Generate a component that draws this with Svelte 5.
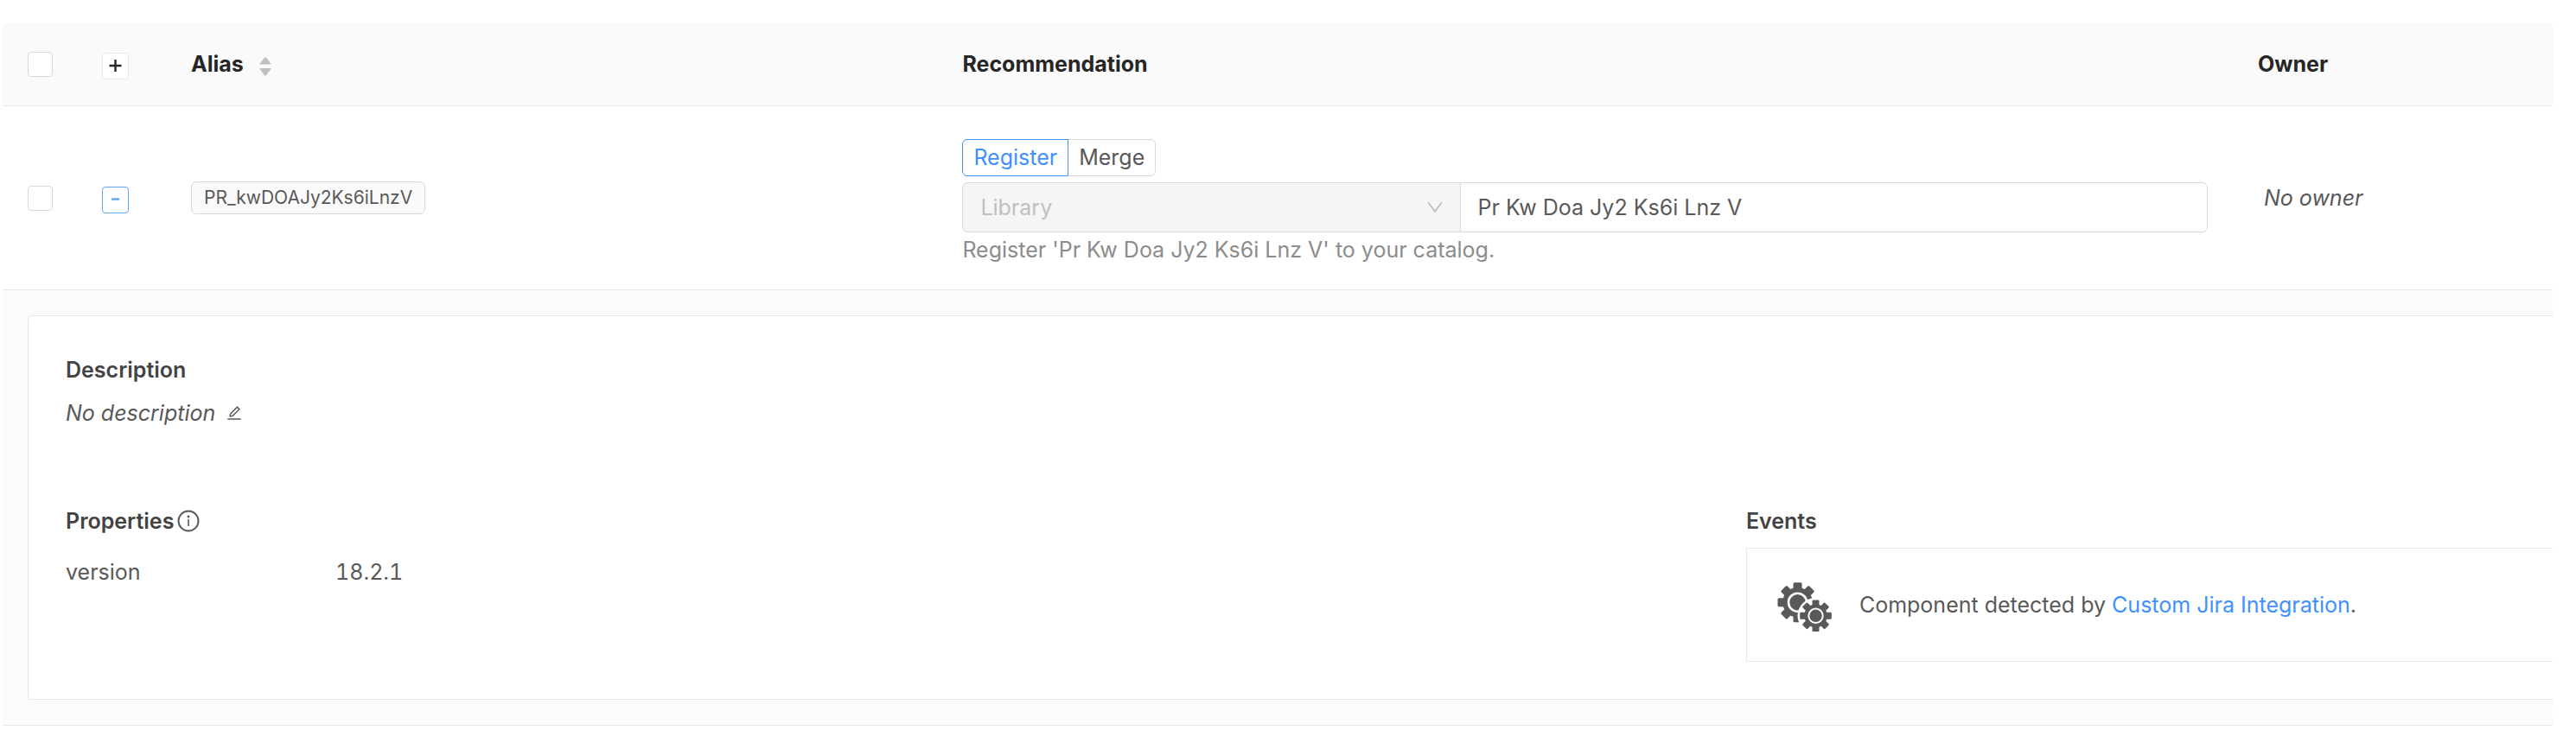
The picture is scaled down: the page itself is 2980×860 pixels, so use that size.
<script>
    let alias = 'PR_kwDOAJy2Ks6iLnzV';
    let name = 'Pr Kw Doa Jy2 Ks6i Lnz V';
    let action = 'register';
    let expanded = true;
    let allSelected = false;
    let selected = false;

    const properties = [{ key: 'version', value: '18.2.1' }];
    const teeth = [0, 45, 90, 135, 180, 225, 270, 315];

    $: message = action === 'register' ? `Register '${name}' to your catalog.` : `Merge '${name}' into your catalog.`;
</script>

<table class="components">
    <colgroup>
        <col class="col-select">
        <col class="col-expand">
        <col class="col-alias">
        <col class="col-recommendation">
        <col>
    </colgroup>
    <thead>
        <tr>
            <th><input type="checkbox" aria-label="Select all" bind:checked={allSelected}></th>
            <th>
                <button class="expand" aria-label="Expand all">
                    <svg viewBox="0 0 29 29"><path d="M7.500 14h14M14.500 7v14" stroke="#262626" stroke-width="2.4" /></svg>
                </button>
            </th>
            <th>
                <span class="sortable">
                    Alias
                    <svg class="sorter" viewBox="0 0 14 22"><path d="M0 8.500L6 .8Q7 0 8 .8L14 8.500zM0 13h14L8 21.200Q7 22 6 21.200z" /></svg>
                </span>
            </th>
            <th>Recommendation</th>
            <th>Owner</th>
        </tr>
    </thead>
    <tbody>
        <tr>
            <td><input type="checkbox" aria-label="Select {alias}" bind:checked={selected}></td>
            <td>
                <button class="expand active" aria-label="Toggle details" on:click={() => (expanded = !expanded)}>
                    <svg viewBox="0 0 29 29"><path d="M10 13.500h9" stroke="#5ba5fb" stroke-width="2.4" /></svg>
                </button>
            </td>
            <td><span class="tag">{alias}</span></td>
            <td class="recommendation">
                <div class="actions">
                    <label class:checked={action === 'register'}>
                        <input type="radio" name="action" value="register" bind:group={action}>Register
                    </label>
                    <label class:checked={action === 'merge'}>
                        <input type="radio" name="action" value="merge" bind:group={action}>Merge
                    </label>
                </div>
                <div class="fields">
                    <div class="type">
                        <select disabled aria-label="Type">
                            <option>Library</option>
                        </select>
                        <svg class="arrow" viewBox="0 0 1024 1024"><path d="M884 256h-75c-5.100 0-9.900 2.500-12.900 6.600L512 654.200 227.900 262.600c-3-4.100-7.800-6.600-12.900-6.600h-75c-6.500 0-10.300 7.400-6.500 12.700l352.600 486.100c12.800 17.600 39 17.600 51.700 0l352.600-486.100c3.900-5.300.1-12.700-6.400-12.700z" /></svg>
                    </div>
                    <input class="name" type="text" aria-label="Name" bind:value={name}>
                </div>
                <p class="message">{message}</p>
            </td>
            <td><em class="owner">No owner</em></td>
        </tr>
        {#if expanded}
            <tr>
                <td class="details" colspan="5">
                    <div class="card">
                        <h4>Description</h4>
                        <p class="description">
                            <em>No description</em>
                            <button class="edit" aria-label="Edit description">
                                <svg viewBox="0 0 1024 1024"><path d="M257.700 752c2 0 4-.2 6-.5L431.900 722c2-.4 3.900-1.300 5.300-2.800l423.900-423.900a9.960 9.960 0 000-14.100L694.900 114.900c-1.900-1.900-4.400-2.900-7.100-2.900s-5.200 1-7.100 2.900L256.800 538.800c-1.500 1.500-2.400 3.300-2.800 5.300l-29.500 168.200a33.500 33.500 0 009.400 29.800c6.600 6.400 14.900 9.900 23.800 9.900zm67.400-174.400L687.800 215l73.300 73.300-362.700 362.600-88.900 15.700 15.600-89zM880 836H144c-17.700 0-32 14.300-32 32v36c0 4.400 3.600 8 8 8h784c4.400 0 8-3.600 8-8v-36c0-17.700-14.300-32-32-32z" /></svg>
                            </button>
                        </p>
                        <div class="columns">
                            <section>
                                <h4>
                                    Properties
                                    <svg class="info" viewBox="0 0 28 28">
                                        <circle cx="14" cy="14" r="11.500" fill="none" stroke="#595959" stroke-width="2" />
                                        <circle cx="14" cy="9" r="1.400" />
                                        <path d="M13.200 12h1.600v8h-1.600z" />
                                    </svg>
                                </h4>
                                <dl>
                                    {#each properties as p}
                                        <dt>{p.key}</dt>
                                        <dd>{p.value}</dd>
                                    {/each}
                                </dl>
                            </section>
                            <section>
                                <h4>Events</h4>
                                <div class="event">
                                    <svg class="gears" viewBox="0 0 64 58">
                                        <g transform="translate(23.500 23.200)">
                                            <circle r="17.300" />
                                            {#each teeth as angle}
                                                <rect x="-5" y="-23" width="10" height="10" rx="1.500" transform="rotate({angle})" />
                                            {/each}
                                            <circle r="10.500" fill="none" stroke="#fff" stroke-width="2.600" />
                                        </g>
                                        <g transform="translate(44.500 38.800)">
                                            <circle r="21" fill="#fff" />
                                            <circle r="13.200" />
                                            {#each teeth as angle}
                                                <rect x="-4" y="-18.300" width="8" height="8" rx="1.200" transform="rotate({angle})" />
                                            {/each}
                                            <circle r="8.200" fill="none" stroke="#fff" stroke-width="2" />
                                        </g>
                                    </svg>
                                    <p>Component detected by <a href="#integration">Custom Jira Integration</a>.</p>
                                </div>
                            </section>
                        </div>
                    </div>
                </td>
            </tr>
        {/if}
    </tbody>
</table>

<style>
    :global(body) {
        background: #fff;
        color: #595959;
        font-family: Inter, "Liberation Sans", sans-serif;
        font-size: 25px;
        line-height: 40px;
    }
    .components {
        border-collapse: separate;
        border-spacing: 0;
        margin: 26px 27px 20px 3px;
        table-layout: fixed;
        width: calc(100% - 30px);
    }
    .col-select {
        width: 86px;
    }
    .col-expand {
        width: 103px;
    }
    .col-alias {
        width: 30.25%;
    }
    .col-recommendation {
        width: 50.8%;
    }
    th,
    td {
        border-bottom: 1px solid #e8e8e8;
        padding: 28px 29px;
        text-align: left;
        vertical-align: middle;
    }
    th {
        background: #fafafa;
        color: #262626;
        font-weight: 700;
    }
    th:first-child {
        border-top-left-radius: 8px;
    }
    button,
    select,
    input {
        box-sizing: border-box;
        color: inherit;
        font: inherit;
        margin: 0;
    }
    button {
        cursor: pointer;
        padding: 0;
    }
    svg {
        display: block;
        fill: #595959;
    }
    input[type="checkbox"] {
        appearance: none;
        background: #fff;
        border: 1px solid #d9d9d9;
        border-radius: 4px;
        display: block;
        height: 29px;
        width: 29px;
    }
    input[type="checkbox"]:checked {
        background: #4090ff;
    }
    .expand {
        background: #fff;
        border: 1px solid #e8e8e8;
        border-radius: 4px;
        display: block;
        height: 31px;
        margin-top: 4px;
        width: 31px;
    }
    .expand.active {
        border-color: #5ba5fb;
    }
    .sortable {
        align-items: center;
        display: flex;
        gap: 18px;
    }
    .sorter {
        fill: #bfbfbf;
        height: 22px;
        margin-top: 5px;
        width: 14px;
    }
    .tag {
        background: #fafafa;
        border: 1px solid #d9d9d9;
        border-radius: 6px;
        display: block;
        font-size: 21px;
        line-height: 36px;
        padding: 0 14px;
        width: fit-content;
    }
    .recommendation {
        padding-bottom: 26px;
        padding-top: 38px;
    }
    .actions {
        display: flex;
        margin-bottom: 7px;
    }
    .actions label {
        border: 1px solid #d9d9d9;
        cursor: pointer;
        line-height: 41px;
        padding: 0 12px;
        position: relative;
    }
    .actions label:first-child {
        border-radius: 6px 0 0 6px;
    }
    .actions label:last-child {
        border-radius: 0 6px 6px 0;
        margin-left: -1px;
    }
    .actions label.checked {
        border-color: #4090ff;
        color: #4090ff;
        z-index: 1;
    }
    .actions input {
        opacity: 0;
        position: absolute;
    }
    .fields {
        display: flex;
    }
    .type {
        flex: none;
        position: relative;
        width: 40%;
    }
    select {
        appearance: none;
        background: #f5f5f5;
        border: 1px solid #d9d9d9;
        border-radius: 6px 0 0 6px;
        color: #bfbfbf;
        display: block;
        height: 58px;
        opacity: 1;
        padding: 0 20px;
        width: 100%;
    }
    .arrow {
        fill: #bfbfbf;
        height: 24px;
        pointer-events: none;
        position: absolute;
        right: 18px;
        top: 17px;
        width: 24px;
    }
    .name {
        border: 1px solid #d9d9d9;
        border-radius: 0 6px 6px 0;
        flex: 1;
        height: 58px;
        margin-left: -1px;
        min-width: 0;
        padding: 0 20px;
    }
    .message {
        color: #8c8c8c;
        margin: 0;
    }
    .owner {
        padding-left: 7px;
    }
    .details {
        background: #fbfbfb;
        padding: 29px 0 29px 29px;
    }
    .card {
        background: #fff;
        border: 1px solid #e8e8e8;
        border-radius: 4px 0 0 4px;
        border-right: 0;
        padding: 42px 0 43px 43px;
    }
    h4 {
        align-items: center;
        color: #434343;
        display: flex;
        font-size: 25px;
        font-weight: 600;
        gap: 3px;
        margin: 0;
    }
    .description {
        align-items: center;
        display: flex;
        gap: 12px;
        margin: 10px 0 85px;
    }
    .edit {
        background: none;
        border: 0;
    }
    .edit svg {
        height: 20px;
        width: 20px;
    }
    .columns {
        display: grid;
        grid-template-columns: 25fr 12fr;
    }
    .info {
        height: 28px;
        width: 28px;
    }
    dl {
        display: grid;
        font-variant-numeric: tabular-nums;
        grid-template-columns: 312px 1fr;
        margin: 19px 0 0;
    }
    dd {
        margin: 0;
    }
    .event {
        align-items: center;
        border: 1px solid #e8e8e8;
        border-right: 0;
        display: flex;
        gap: 31px;
        margin-top: 11px;
        min-height: 130px;
        padding-left: 35px;
    }
    .event p {
        margin: 0;
    }
    .gears {
        height: 58px;
        margin-top: 6px;
        width: 64px;
    }
    a {
        color: #4090ff;
        text-decoration: none;
    }
</style>
